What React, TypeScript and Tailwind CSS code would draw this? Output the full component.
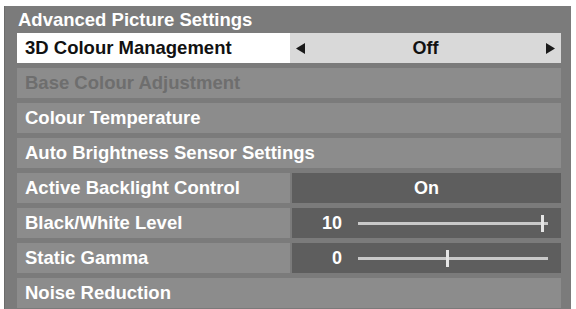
import React from "react";

const font = { fontFamily: '"Liberation Sans", Arial, sans-serif' };

const Slider: React.FC<{ value: string; pos: number }> = ({ value, pos }) => (
  <div className="flex items-center h-full">
    <div className="w-[50px] text-right text-white font-bold text-[18px]">{value}</div>
    <div className="relative ml-[16px] w-[190px] h-[3px] bg-[#c9c9c9]">
      <div
        className="absolute top-[-7px] w-[3px] h-[17px] bg-[#e6e6e6]"
        style={{ left: `${pos}px` }}
      />
    </div>
  </div>
);

const Row: React.FC<{
  label: string;
  disabled?: boolean;
  children?: React.ReactNode;
}> = ({ label, disabled, children }) => (
  <div className="flex h-[30px] gap-[2px]">
    <div
      className={`flex items-center pl-2 font-bold text-[18.5px] bg-[#8c8c8c] ${
        children ? "w-[273px]" : "flex-1"
      } ${disabled ? "text-[#6e6e6e]" : "text-white"}`}
    >
      {label}
    </div>
    {children && <div className="flex-1 bg-[#5e5e5e]">{children}</div>}
  </div>
);

const App: React.FC = () => {
  return (
    <div className="w-[576px] h-[309px] bg-white pl-1 pt-[6px] pr-[5px] overflow-hidden" style={font}>
      <div className="h-full bg-[#7b7b7b] pl-3 pr-[10px] border-l border-[#6c6c6c]">
        <div className="h-[27px] flex items-center text-white font-bold text-[18.5px] pl-[1px]">
          Advanced Picture Settings
        </div>
        <div className="flex flex-col gap-[5px]">
          <div className="flex h-[30px]">
            <div className="w-[273px] bg-white flex items-center pl-2 font-bold text-[18.5px] text-[#111]">
              3D Colour Management
            </div>
            <div className="flex-1 bg-[#d9d9d9] flex items-center justify-between px-[6px] text-[#111]">
              <svg width="9" height="11" viewBox="0 0 9 11">
                <polygon points="9,0 9,11 0,5.5" fill="#1a1a1a" />
              </svg>
              <span className="font-bold text-[18px]">Off</span>
              <svg width="9" height="11" viewBox="0 0 9 11">
                <polygon points="0,0 0,11 9,5.5" fill="#1a1a1a" />
              </svg>
            </div>
          </div>
          <Row label="Base Colour Adjustment" disabled />
          <Row label="Colour Temperature" />
          <Row label="Auto Brightness Sensor Settings" />
          <Row label="Active Backlight Control">
            <div className="h-full flex items-center justify-center text-white font-bold text-[18px]">On</div>
          </Row>
          <Row label="Black/White Level">
            <Slider value="10" pos={183} />
          </Row>
          <Row label="Static Gamma">
            <Slider value="0" pos={88} />
          </Row>
          <Row label="Noise Reduction" />
        </div>
      </div>
    </div>
  );
};

export default App;
